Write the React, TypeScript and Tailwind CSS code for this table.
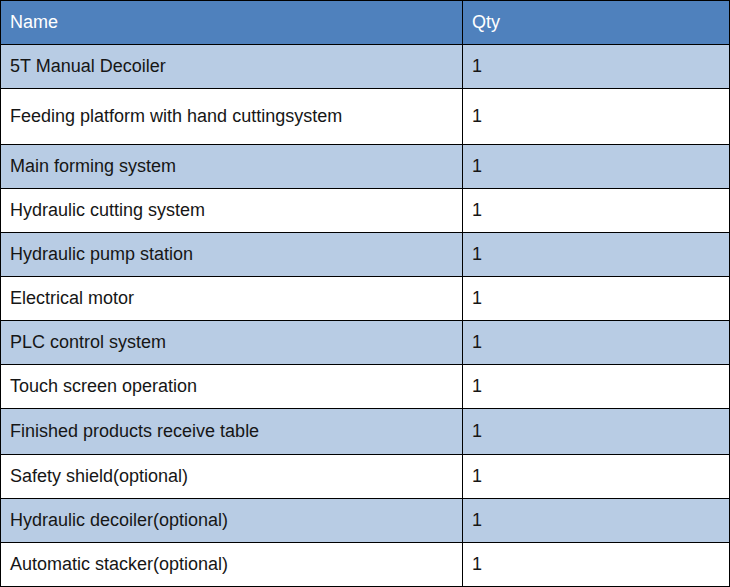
const rows: { name: string; qty: string; h: string }[] = [
  { name: '5T Manual Decoiler', qty: '1', h: 'h-[44px]' },
  { name: 'Feeding platform with hand cuttingsystem', qty: '1', h: 'h-[56px]' },
  { name: 'Main forming system', qty: '1', h: 'h-[44px]' },
  { name: 'Hydraulic cutting system', qty: '1', h: 'h-[44px]' },
  { name: 'Hydraulic pump station', qty: '1', h: 'h-[44px]' },
  { name: 'Electrical motor', qty: '1', h: 'h-[44px]' },
  { name: 'PLC control system', qty: '1', h: 'h-[44px]' },
  { name: 'Touch screen operation', qty: '1', h: 'h-[44px]' },
  { name: 'Finished products receive table', qty: '1', h: 'h-[46px]' },
  { name: 'Safety shield(optional)', qty: '1', h: 'h-[44px]' },
  { name: 'Hydraulic decoiler(optional)', qty: '1', h: 'h-[44px]' },
  { name: 'Automatic stacker(optional)', qty: '1', h: 'h-[44px]' },
];

export default function App() {
  return (
    <div className="w-[730px] bg-white font-['Liberation_Sans',Arial,sans-serif] text-[18px] text-[#161616]">
      <table className="w-[730px] border-collapse table-fixed">
        <colgroup>
          <col className="w-[462px]" />
          <col />
        </colgroup>
        <thead>
          <tr className="h-[44px] bg-[#4f81bd] text-white">
            <th className="border border-black px-[9px] text-left font-normal">Name</th>
            <th className="border border-black px-[9px] text-left font-normal">Qty</th>
          </tr>
        </thead>
        <tbody>
          {rows.map((r, i) => (
            <tr key={i} className={`${r.h} ${i % 2 === 0 ? 'bg-[#b8cce4]' : 'bg-white'}`}>
              <td className="border border-black px-[9px]">{r.name}</td>
              <td className="border border-black px-[9px]">{r.qty}</td>
            </tr>
          ))}
        </tbody>
      </table>
    </div>
  );
}
